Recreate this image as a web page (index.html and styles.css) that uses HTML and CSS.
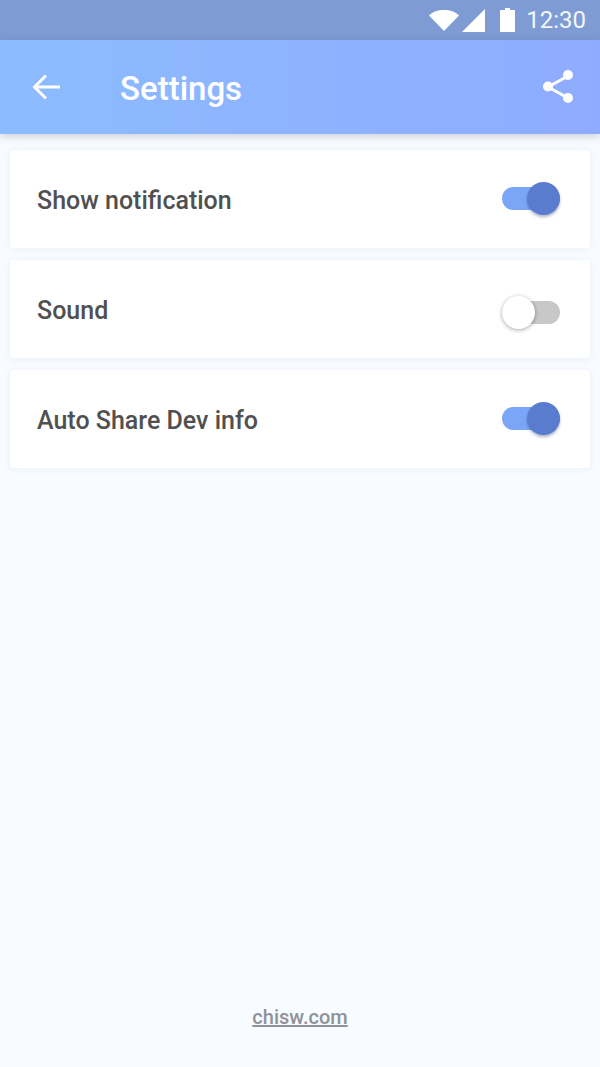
FILE: index.html
```html
<!DOCTYPE html>
<html lang="en">
<head>
    <meta charset="UTF-8">
    <meta name="viewport" content="width=device-width, initial-scale=1.0">
    <title>Settings</title>
    <link rel="stylesheet" href="styles.css">
</head>
<body>

<div class="status-bar">
    <svg class="status-wifi" width="30" height="22" viewBox="0 0 30 22">
        <path fill="#fff" d="M0 6.500C4 2.500 9 1 15 1s11 1.500 15 5.500L15 22z"/>
    </svg>
    <svg class="status-signal" width="23" height="23" viewBox="0 0 23 23">
        <path fill="#fff" d="M23 0v23H0z"/>
    </svg>
    <svg class="status-battery" width="15" height="24" viewBox="0 0 15 24">
        <path fill="#fff" d="M5 0h5v2h5v22H0V2h5z"/>
    </svg>
    <span class="status-time">12:30</span>
</div>

<header class="app-bar">
    <svg class="back-icon" width="28" height="28" viewBox="0 0 28 28">
        <path fill="none" stroke="#fff" stroke-width="3" d="M2 14h26M14 2.500 2.500 14 14 25.500"/>
    </svg>
    <h1 class="app-title">Settings</h1>
    <svg class="share-icon" width="32" height="36" viewBox="0 0 32 36">
        <path fill="none" stroke="#fff" stroke-width="3" d="M26 7 6 18l20 11"/>
        <circle cx="26" cy="6" r="5" fill="#fff"/>
        <circle cx="6" cy="17.500" r="5" fill="#fff"/>
        <circle cx="26" cy="29" r="5" fill="#fff"/>
    </svg>
</header>

<main class="settings-list">
    <div class="setting-row">
        <span class="setting-label">Show notification</span>
        <span class="toggle toggle-on"><span class="toggle-knob"></span></span>
    </div>
    <div class="setting-row">
        <span class="setting-label">Sound</span>
        <span class="toggle toggle-off"><span class="toggle-knob"></span></span>
    </div>
    <div class="setting-row">
        <span class="setting-label">Auto Share Dev info</span>
        <span class="toggle toggle-on"><span class="toggle-knob"></span></span>
    </div>
</main>

<footer class="page-footer">
    <a class="footer-link" href="#">chisw.com</a>
</footer>

</body>
</html>
```

FILE: styles.css
```css
body {
    margin: 0;
    height: 1067px;
    display: flex;
    flex-direction: column;
    overflow: hidden;
    font-family: 'Roboto', sans-serif;
    background-color: #f8fbff;
}

.status-bar {
    height: 40px;
    display: flex;
    align-items: center;
    justify-content: flex-end;
    padding-right: 14px;
    background-color: #7e9cd3;
}

.status-wifi {
    margin-right: 3px;
}

.status-signal {
    margin-right: 15px;
}

.status-battery {
    margin-right: 11px;
}

.status-time {
    color: #f2f6ff;
    font-size: 24px;
}

.app-bar {
    position: relative;
    z-index: 1;
    height: 94px;
    display: flex;
    align-items: center;
    padding: 0 26px 0 32px;
    background: linear-gradient(90deg, #8cbcff, #8fabff);
    box-shadow: 0 2px 8px rgba(60, 70, 90, 0.25);
}

.back-icon {
    margin-right: 60px;
}

.app-title {
    flex: 1;
    margin: 0;
    padding-top: 2px;
    color: #fff;
    font-size: 33px;
    font-weight: 500;
}

.settings-list {
    flex: 1;
    display: flex;
    flex-direction: column;
    gap: 12px;
    padding: 16px 10px 0;
}

.setting-row {
    height: 98px;
    display: flex;
    align-items: center;
    justify-content: space-between;
    padding: 0 30px 0 27px;
    border-radius: 3px;
    background-color: #fff;
    box-shadow: 0 1px 6px rgba(130, 160, 210, 0.12);
}

.setting-label {
    color: #505050;
    font-size: 25px;
    font-weight: 500;
    padding-top: 3px;
}

.toggle {
    position: relative;
    width: 58px;
    height: 23px;
    border-radius: 12px;
}

.toggle-knob {
    position: absolute;
    top: -5px;
    width: 33px;
    height: 33px;
    border-radius: 50%;
}

.toggle-on {
    background-color: #7ba6f7;
    margin-bottom: 1px;
}

.toggle-on .toggle-knob {
    right: 0;
    background-color: #5a7ccf;
    box-shadow: 0 2px 3px rgba(50, 70, 120, 0.4);
}

.toggle-off {
    background-color: #c8c8c8;
    margin-top: 7px;
}

.toggle-off .toggle-knob {
    left: 0;
    background-color: #fff;
    box-shadow: 0 1px 4px rgba(0, 0, 0, 0.35);
}

.page-footer {
    height: 62px;
    text-align: center;
}

.footer-link {
    color: #8f9299;
    font-size: 20px;
    font-weight: 500;
}
```
